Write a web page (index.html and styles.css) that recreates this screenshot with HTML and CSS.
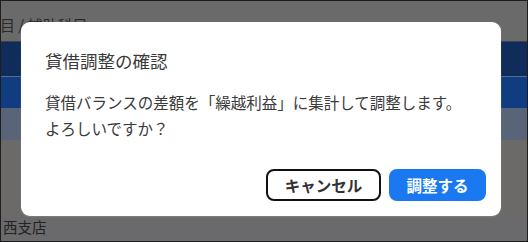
FILE: index.html
```html
<!DOCTYPE html>
<html lang="ja">
  <head>
    <meta charset="UTF-8" />
    <title>貸借調整の確認</title>
    <link rel="stylesheet" href="styles.css">
  </head>
  <body>
    <div class="screen">
      <div class="page">
        <div class="page-head"><span class="crumb">目 / 補助科目</span></div>
        <div class="band band-dark"></div>
        <div class="band band-blue"></div>
        <div class="band band-pale"></div>
        <div class="page-body"></div>
        <div class="page-row"><span class="cell">西支店</span></div>
      </div>
      <div class="modal">
        <div class="dialog">
          <h5 class="d-title">貸借調整の確認</h5>
          <p class="d-text">貸借バランスの差額を「繰越利益」に集計して調整します。<br>よろしいですか？</p>
          <div class="d-actions">
            <a href="javascript:void (0);" class="btn btn-cancel">キャンセル</a>
            <a href="javascript:void (0);" class="btn btn-ok">調整する</a>
          </div>
        </div>
      </div>
    </div>
  </body>
</html>
```

FILE: styles.css
```css
* {
  margin: 0;
  padding: 0;
  border: 0;
  box-sizing: border-box;
  text-decoration: none;
}
body {
  font-family: 'Noto Sans CJK JP', 'Noto Sans', sans-serif;
  color: #333;
  background: #1e1e1e;
}
.screen {
  position: relative;
  width: 528px;
  height: 242px;
  border: 1px solid #1e1e1e;
  overflow: hidden;
  background-color: #6a6a6b;
}
.page-head {
  height: 41px;
  background-color: #6a6a6a;
  border-bottom: 1px solid #3a4254;
  padding-top: 10px;
  line-height: 28px;
  font-size: 15px;
  color: #2a2a2a;
}
.crumb {
  margin-left: -1px;
}
.band {
  height: 33px;
}
.band-dark {
  background-color: #0f2c5b;
  border-bottom: 1px solid #5b6d8c;
  height: 35px;
}
.band-blue {
  background-color: #103d80;
  height: 31px;
}
.band-pale {
  background-color: #5a6479;
  height: 32px;
}
.page-body {
  height: 77px;
  background-color: #6c6a69;
}
.page-row {
  height: 24px;
  line-height: 20px;
  font-size: 14.5px;
  color: #232323;
  background-color: #6a6a6c;
}
.cell {
  margin-left: 2px;
}
.modal {
  position: absolute;
  left: 0;
  top: 0;
  right: 0;
  bottom: 0;
}
.dialog {
  position: absolute;
  left: 20px;
  top: 21px;
  width: 480px;
  height: 194px;
  background-color: #fff;
  border-radius: 9px;
  padding: 26px 15px 15px 24px;
  box-shadow: 0 1px 2px rgba(255, 255, 255, 0.15);
}
.d-title {
  font-size: 17.5px;
  font-weight: normal;
  line-height: 26px;
  color: #3a3a3a;
}
.d-text {
  margin-top: 15px;
  font-size: 15.5px;
  line-height: 26px;
  color: #3a3a3a;
}
.d-actions {
  margin-top: 28px;
  display: flex;
  justify-content: flex-end;
  gap: 8px;
}
.btn {
  display: inline-flex;
  align-items: center;
  justify-content: center;
  height: 32px;
  border-radius: 8px;
  font-size: 15.5px;
  font-weight: bold;
}
.btn-cancel {
  width: 115px;
  border: 2px solid #111;
  color: #333;
  background-color: #fff;
}
.btn-ok {
  width: 97px;
  color: #fff;
  background-color: #1a79f0;
}
```
